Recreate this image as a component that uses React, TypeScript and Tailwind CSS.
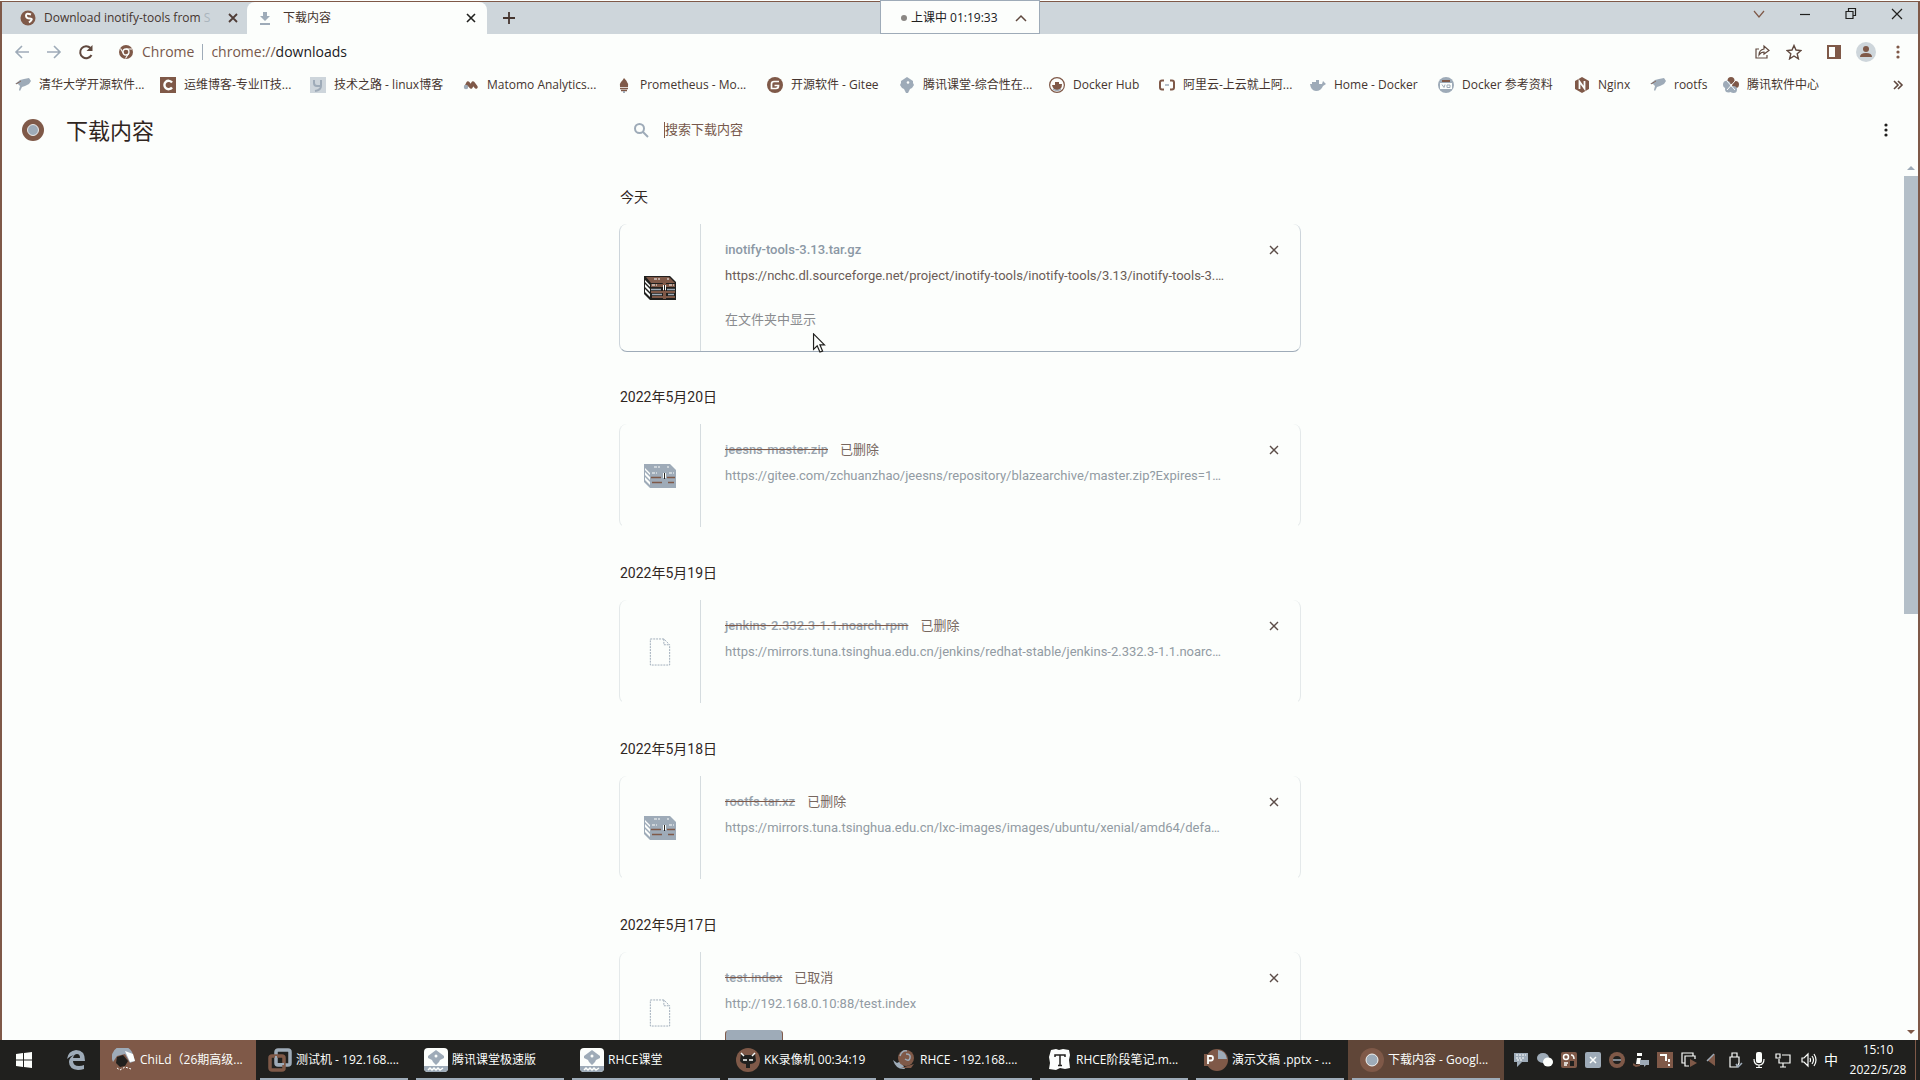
import type { ReactNode } from "react";

const BROWN = "#7f5948";
const BLUE = "#9eabb8";
const PAPER = "#fcfefc";
const INK = "#20201e";

type IconProps = { children: ReactNode; size?: string; box?: string };

function Icon({ children, size = "size-4", box = "0 0 16 16" }: IconProps) {
  return (
    <svg viewBox={box} className={`${size} shrink-0`} fill="none" aria-hidden="true">
      {children}
    </svg>
  );
}

function Cross({ size = "size-3", color = "#4f3c36", weight = "1.600" }: { size?: string; color?: string; weight?: string }) {
  return (
    <Icon size={size} box="0 0 12 12">
      <path d="M2 2l8 8M10 2l-8 8" stroke={color} strokeWidth={weight} />
    </Icon>
  );
}

function Kebab({ color }: { color: string }) {
  return (
    <Icon>
      <g fill={color}>
        <circle cx="8" cy="3" r="1.600" />
        <circle cx="8" cy="8" r="1.600" />
        <circle cx="8" cy="13" r="1.600" />
      </g>
    </Icon>
  );
}

function Bird() {
  return (
    <Icon>
      <path d="M0 7l5-4 4-1 5-1 2 3-2 3-4 2-3 1-2 4-1-1 1-4-2-2z" fill={BLUE} />
      <path d="M1 7l5-3" stroke={BROWN} strokeWidth=".8" />
    </Icon>
  );
}

function Knot() {
  return (
    <Icon>
      <path d="M8 0l3 2 3 2v2l1 2-2 3-2 1-2 4H7l-2-4-2-1-2-3 1-2V4l3-2z" fill={BLUE} />
      <circle cx="9" cy="5.500" r="1.300" fill={PAPER} />
    </Icon>
  );
}

function Chest({ faded }: { faded?: boolean }) {
  const lid = faded ? BLUE : BROWN;
  const dark = faded ? BLUE : INK;
  const band = faded ? BROWN : BLUE;
  return (
    <svg viewBox="0 0 32 24" className="h-6 w-8 shrink-0" aria-hidden="true">
      <path d="M0 0h26l6 6v18H6L0 18z" fill={dark} />
      <path d="M2 1h23l6 6H7z" fill={lid} />
      <path d="M1 4l5 5v2L1 6zM1 8l5 5v3l-5-5zM1 13l5 5v3l-5-5z" fill={PAPER} />
      <path d="M7 8h24v3H7zM7 15h24v2H7zM8 20h23v2H8z" fill={lid} />
      <path d="M10 3h6M23 3h2M8 9h5M25 9h5" stroke={PAPER} strokeWidth="1" strokeDasharray="3 1" />
      <path d="M7 13.500h10M23 13.500h8M8 18.500h10M24 18.500h6" stroke={band} strokeWidth="1.500" />
      <path d="M16 1h3l3 6v16h-3V8z" fill={lid} />
      <path d="M19 9h1v5h-1zM21 9h1v5h-1z" fill={PAPER} />
      <path d="M20 9h1v6h-1z" fill={INK} />
    </svg>
  );
}

function FileIcon() {
  return (
    <svg viewBox="0 0 22 29" className="h-7 w-6 shrink-0" fill="none" aria-hidden="true">
      <path d="M1 1h14l6 6v21H1zM15 1v6h6" stroke={BLUE} strokeWidth="1" strokeDasharray="2 1" />
    </svg>
  );
}

function ChromeBall({ size }: { size: string }) {
  return (
    <Icon size={size}>
      <circle cx="8" cy="8" r="8" fill={BROWN} />
      <circle cx="8" cy="8" r="4" fill={BLUE} stroke={PAPER} strokeWidth=".6" />
    </Icon>
  );
}

const bookmarks: { label: string; width: string; icon: ReactNode }[] = [
  { label: "清华大学开源软件...", width: "w-[145px]", icon: <Bird /> },
  {
    label: "运维博客-专业IT技...",
    width: "w-[150px]",
    icon: (
      <Icon>
        <path d="M0 0h16v16H0z" fill={BROWN} />
        <path d="M12 5.500A4.200 4.200 0 1 0 12 10.500" stroke={PAPER} strokeWidth="2.400" />
      </Icon>
    ),
  },
  {
    label: "技术之路 - linux博客",
    width: "w-[153px]",
    icon: (
      <Icon>
        <path d="M0 0h16v16H0z" fill="#cdd5db" />
        <path d="M4 3v3q0 3 3 3h3M11 3v6q0 4-6 5" stroke={BLUE} strokeWidth="2" />
      </Icon>
    ),
  },
  {
    label: "Matomo Analytics...",
    width: "w-[153px]",
    icon: (
      <Icon>
        <path d="M3 10l2-4 3 4 2-4 3 4" stroke={BROWN} strokeWidth="3.500" strokeLinejoin="round" strokeLinecap="round" />
        <circle cx="3" cy="10" r="2.200" fill={BLUE} />
      </Icon>
    ),
  },
  {
    label: "Prometheus - Mo...",
    width: "w-[151px]",
    icon: (
      <Icon>
        <path d="M8 1q3 3 3 4 2 2 1 5H4Q3 7 5 5q2-2 3-4z" fill={BROWN} />
        <path d="M4 11.500h8M5 13.500h6" stroke={BROWN} strokeWidth="1.300" />
        <path d="M7 14h2v2H7z" fill={BLUE} />
      </Icon>
    ),
  },
  {
    label: "开源软件 - Gitee",
    width: "w-[132px]",
    icon: (
      <Icon>
        <circle cx="8" cy="8" r="8" fill={BROWN} />
        <path d="M12 4.500H7Q4.500 4.500 4.500 7v4.500H9Q11.500 11.500 11.500 8.500H7.500" stroke={PAPER} strokeWidth="1.700" />
      </Icon>
    ),
  },
  { label: "腾讯课堂-综合性在...", width: "w-[150px]", icon: <Knot /> },
  {
    label: "Docker Hub",
    width: "w-[110px]",
    icon: (
      <Icon>
        <circle cx="8" cy="8" r="7.400" stroke={BROWN} strokeWidth="1.200" />
        <path d="M3 8h3V5h4v2h3q0 6-5 6-4 0-5-5z" fill={BROWN} />
        <path d="M4 12q4 3 8 0" stroke={BLUE} strokeWidth="1.500" />
      </Icon>
    ),
  },
  {
    label: "阿里云-上云就上阿...",
    width: "w-[151px]",
    icon: (
      <Icon>
        <path d="M5 3.500H3q-2 0-2 2v5q0 2 2 2h2M11 3.500h2q2 0 2 2v5q0 2-2 2h-2" stroke={BROWN} strokeWidth="2" />
        <path d="M6 8h4" stroke={BLUE} strokeWidth="1.500" />
      </Icon>
    ),
  },
  {
    label: "Home - Docker",
    width: "w-[128px]",
    icon: (
      <Icon>
        <path d="M0 7h2V5h4V3h3v4h3l1-3 3 3-3 2q-2 5-7 5-5 0-6-7z" fill={BLUE} />
      </Icon>
    ),
  },
  {
    label: "Docker 参考资料",
    width: "w-[136px]",
    icon: (
      <Icon>
        <circle cx="8" cy="8" r="8" fill={BLUE} />
        <path d="M4 4h8" stroke={BROWN} strokeWidth="2" />
        <path d="M2 6h12v6H2z" fill={PAPER} />
        <path d="M4 7.500l2 3 1-3M9 10.500V8h3v2.500z" stroke={BLUE} />
      </Icon>
    ),
  },
  {
    label: "Nginx",
    width: "w-[76px]",
    icon: (
      <Icon>
        <path d="M8 0l7 4v8l-7 4-7-4V4z" fill={BROWN} />
        <path d="M5.500 12V4.500l5 7V4" stroke={PAPER} strokeWidth="1.800" />
      </Icon>
    ),
  },
  { label: "rootfs", width: "w-[73px]", icon: <Bird /> },
  {
    label: "腾讯软件中心",
    width: "w-[110px]",
    icon: (
      <Icon>
        <circle cx="8" cy="3.500" r="3.500" fill={BROWN} />
        <circle cx="12.500" cy="7.500" r="3.500" fill={BROWN} />
        <circle cx="3.800" cy="7.500" r="3.800" fill={BLUE} />
        <circle cx="5.500" cy="12" r="3.500" fill={BLUE} />
        <circle cx="10.500" cy="12.500" r="3.500" fill={BLUE} />
        <path d="M4 4l8 9M12 4l-8 9" stroke={PAPER} />
      </Icon>
    ),
  },
];

type Download = {
  name: string;
  url: string;
  state?: string;
  kind: "archive" | "file";
  showLink?: boolean;
  retry?: boolean;
};

const groups: { date: string; item: Download }[] = [
  {
    date: "今天",
    item: {
      name: "inotify-tools-3.13.tar.gz",
      url: "https://nchc.dl.sourceforge.net/project/inotify-tools/inotify-tools/3.13/inotify-tools-3.…",
      kind: "archive",
      showLink: true,
    },
  },
  {
    date: "2022年5月20日",
    item: {
      name: "jeesns-master.zip",
      state: "已删除",
      url: "https://gitee.com/zchuanzhao/jeesns/repository/blazearchive/master.zip?Expires=1…",
      kind: "archive",
    },
  },
  {
    date: "2022年5月19日",
    item: {
      name: "jenkins-2.332.3-1.1.noarch.rpm",
      state: "已删除",
      url: "https://mirrors.tuna.tsinghua.edu.cn/jenkins/redhat-stable/jenkins-2.332.3-1.1.noarc…",
      kind: "file",
    },
  },
  {
    date: "2022年5月18日",
    item: {
      name: "rootfs.tar.xz",
      state: "已删除",
      url: "https://mirrors.tuna.tsinghua.edu.cn/lxc-images/images/ubuntu/xenial/amd64/defa…",
      kind: "archive",
    },
  },
  {
    date: "2022年5月17日",
    item: {
      name: "test.index",
      state: "已取消",
      url: "http://192.168.0.10:88/test.index",
      kind: "file",
      retry: true,
    },
  },
];

function DownloadCard({ item }: { item: Download }) {
  const active = !item.state;
  return (
    <article
      className={`mb-2 flex rounded-lg border border-t-0 ${
        active
          ? "h-32 border-[#cdd5db] border-b-[#9eabb8]"
          : item.retry
            ? "h-[122px] border-[#e4e9ea]"
            : "h-[104px] border-[#e4e9ea] border-b-transparent"
      }`}
    >
      <div className="flex w-[81px] shrink-0 items-center justify-center border-r border-[#d5dcdf]">
        {item.kind === "archive" ? <Chest faded={!active} /> : <FileIcon />}
      </div>
      <div className="min-w-0 flex-1 pl-6 pt-4 text-[13px] leading-5">
        <div className="flex gap-3">
          {active ? (
            <a href="#file" className="font-medium text-[#8b98a5]">{item.name}</a>
          ) : (
            <>
              <span className="font-medium text-[#98a3ad] line-through decoration-[#7f5948]">{item.name}</span>
              <span className="text-[#77675f]">{item.state}</span>
            </>
          )}
        </div>
        <a href="#source" className={`mt-1.5 block whitespace-nowrap ${active ? "text-[#6b5c57]" : "text-[#929ba3]"}`}>
          {item.url}
        </a>
        {item.showLink && (
          <a href="#folder" className="mt-6 block text-[#8a8c8f]">在文件夹中显示</a>
        )}
        {item.retry && (
          <button
            type="button"
            aria-label="重试"
            className="mt-4 block h-8 w-[58px] rounded border border-[#7f5948] border-t-[#9eabb8] bg-[#9eabb8]"
          />
        )}
      </div>
      <button type="button" aria-label="从列表中移除" className="mr-4 mt-4 flex size-5 items-center justify-center">
        <Cross color="#5c4d48" weight="1.400" />
      </button>
    </article>
  );
}

function ClassroomIcon() {
  return (
    <Icon size="size-6" box="0 0 24 24">
      <rect width="24" height="24" rx="4" fill={PAPER} />
      <path d="M12 2l4 3 4 3v2l-4 2-1 2-3 3-3-3-1-2-4-2V8l4-3z" fill={BLUE} />
      <path d="M0 18h24v2q0 4-4 4H4q-4 0-4-4z" fill={BLUE} />
      <circle cx="12" cy="8" r="1.500" fill={PAPER} />
      <path d="M4 22l2-2 2 2 2-2 2 2 2-2 2 2 3-2" stroke={PAPER} strokeWidth="1.500" />
    </Icon>
  );
}

const tasks: { label: string; icon: ReactNode; tone?: string; plain?: boolean }[] = [
  {
    label: "ChiLd（26期高级...",
    tone: "bg-[#7f5948]",
    plain: true,
    icon: (
      <Icon size="size-6" box="0 0 24 24">
        <path d="M1 14A10 10 0 0 1 20 4l3 9-5 2-5-9-8 2z" fill={BLUE} />
        <path d="M13 3l8 3 2 7-5 1z" fill={PAPER} />
        <path d="M5 9l6-2 5 6-3 5-5 1-4-4z" fill={INK} />
        <path d="M5 20l3 2 5-3 6 2" stroke={PAPER} strokeDasharray="2 1.500" />
      </Icon>
    ),
  },
  {
    label: "测试机 - 192.168....",
    icon: (
      <Icon size="size-6" box="0 0 24 24">
        <rect x="8" y="2" width="14" height="15" rx="2" stroke={BLUE} strokeWidth="3.500" />
        <rect x="2" y="8" width="14" height="14" rx="2" stroke={BROWN} strokeWidth="3.500" />
        <path d="M8 8v8h8" stroke={BLUE} strokeWidth="2" />
      </Icon>
    ),
  },
  { label: "腾讯课堂极速版", icon: <ClassroomIcon /> },
  { label: "RHCE课堂", icon: <ClassroomIcon /> },
  {
    label: "KK录像机 00:34:19",
    icon: (
      <Icon size="size-6" box="0 0 24 24">
        <circle cx="12" cy="12" r="12" fill={BROWN} />
        <path d="M5 5l4 2h6l4-2 1 8q-2 3-6 3v4h-4v-4q-4 0-6-3z" fill={INK} />
        <path d="M5 5l3 3M19 5l-3 3M7 12h4M13 12h4" stroke={PAPER} strokeWidth="1.500" />
      </Icon>
    ),
  },
  {
    label: "RHCE - 192.168....",
    icon: (
      <Icon size="size-6" box="0 0 24 24">
        <path d="M1 12l4 3 4-2 4 8q-9 1-12-9z" fill={BLUE} />
        <circle cx="14" cy="10" r="8" fill={BROWN} />
        <path d="M9 20l13-4-3 4z" fill={BROWN} />
        <path d="M8 8q2-6 7-5M14 6q5 0 4 4t-5 1" stroke={BLUE} strokeWidth="1.500" />
      </Icon>
    ),
  },
  {
    label: "RHCE阶段笔记.m...",
    icon: (
      <Icon size="size-6" box="0 0 24 24">
        <path d="M3 2l5-1 3 1 4-1 6 1 1 5-1 5 1 8-5 1-5-1-4 2-7-1 1-6-1-6z" fill={PAPER} />
        <path d="M7 9V7h10v2M12 7v10M10 17.500h4" stroke={INK} strokeWidth="1.500" />
      </Icon>
    ),
  },
  {
    label: "演示文稿 .pptx - ...",
    icon: (
      <Icon size="size-6" box="0 0 24 24">
        <circle cx="13" cy="12" r="11" fill={BROWN} />
        <path d="M14 2q8 1 9 9h-9z" fill={BLUE} />
        <path d="M0 6h11v12H0z" fill={BROWN} />
        <path d="M4 16V8h3q2 0 2 2.200T7 12.500H4" stroke={PAPER} strokeWidth="1.800" />
      </Icon>
    ),
  },
  { label: "下载内容 - Googl...", tone: "bg-[#604638]", icon: <ChromeBall size="size-6" /> },
];

const tray: { name: string; width: string; icon: ReactNode }[] = [
  { name: "消息", width: "w-6", icon: (<Icon><path d="M1 1h14v9H9l-5 5v-5H1z" fill={BLUE} /><path d="M3 3h10M3 6h9M4 8h6" stroke={PAPER} strokeDasharray="2 1" /></Icon>) },
  { name: "微信", width: "w-6", icon: (<Icon><ellipse cx="6" cy="6" rx="6" ry="5" fill={BLUE} /><ellipse cx="11" cy="10" rx="5" ry="4.500" fill={PAPER} /></Icon>) },
  { name: "剪贴板", width: "w-6", icon: (<Icon><rect width="16" height="16" rx="2" fill={BROWN} /><circle cx="5" cy="5" r="2.500" stroke={PAPER} strokeWidth="1.500" /><path d="M10 3q3 0 3 4M3 11h4M3 13h3" stroke={PAPER} strokeWidth="1.500" /><path d="M9 9h4v5H9z" fill={INK} /></Icon>) },
  { name: "组件", width: "w-6", icon: (<Icon><rect width="16" height="16" rx="2" fill={BLUE} /><path d="M5 5l6 6M11 5l-6 6" stroke={PAPER} strokeWidth="1.500" /></Icon>) },
  { name: "录像机", width: "w-6", icon: (<Icon><circle cx="8" cy="8" r="8" fill={BROWN} /><path d="M4 8q0-4 4-4t4 4-4 4-4-4z" fill={INK} /><path d="M4 8h8" stroke={BLUE} strokeWidth="1.500" /></Icon>) },
  { name: "助手", width: "w-6", icon: (<Icon><path d="M4 1h5v3H4zM4 6h4l-1 6H3z" fill={PAPER} /><path d="M7 8h9v5h-3l-2 2v-2H7z" fill={BLUE} /><path d="M0 12l3 2 4-1" stroke={BROWN} strokeWidth="2" /></Icon>) },
  { name: "警告", width: "w-6", icon: (<Icon><path d="M0 0h16v16H0z" fill={BROWN} /><path d="M3 3h6v6M12 7v3M12 12v2" stroke={PAPER} strokeWidth="2" /></Icon>) },
  { name: "虚拟机", width: "w-6", icon: (<Icon><path d="M4 11H1V1h11v3M8 14H4V4h10v3" stroke={PAPER} strokeWidth="1.200" /><path d="M9 7l7 4-7 4z" fill={BROWN} /></Icon>) },
  { name: "播放", width: "w-5", icon: (<Icon><path d="M12 2v12L4 8z" fill={BROWN} /><path d="M11 2L4 9" stroke={BLUE} strokeWidth="1.500" /></Icon>) },
  { name: "USB", width: "w-7", icon: (<Icon><path d="M5 1h5v4H5zM3 5h9v6l-2 4H3z" stroke={PAPER} strokeWidth="1.200" /><path d="M9 12l2 3 4-4" stroke={BLUE} strokeWidth="1.500" /></Icon>) },
  { name: "麦克风", width: "w-5", icon: (<Icon><rect x="5" width="6" height="11" rx="2" fill={PAPER} /><path d="M3 7q0 6 5 6t5-6M8 13v3M5 15.500h6" stroke={PAPER} strokeWidth="1.200" /></Icon>) },
  { name: "网络", width: "w-7", icon: (<Icon><path d="M1 2h4v4H1zM7 3h8v8H4V7M8 11v4M5 15h6" stroke={PAPER} strokeWidth="1.200" /></Icon>) },
  { name: "音量", width: "w-6", icon: (<Icon><path d="M1 6h2l4-4v12l-4-4H1zM9 6q1 2 0 4M11 4q3 4 0 8M13 2q4 6 0 12" stroke={PAPER} strokeWidth="1.200" /></Icon>) },
];

export default function App() {
  return (
    <div className="flex h-screen w-full flex-col overflow-hidden bg-[#fcfefc] font-['Open_Sans','Noto_Sans_CJK_SC',sans-serif] text-xs text-[#45352f]">
      <div className="mt-px flex min-h-0 flex-1 flex-col border-x-2 border-t border-[#7f5948]">
        <header className="shrink-0">
          <div className="relative flex h-8 items-stretch bg-[#ced6db]">
            <div className="flex w-[245px] items-center pl-[18px] pr-2">
              <Icon>
                <circle cx="8" cy="8" r="7.500" fill={BROWN} />
                <path d="M11 4.500q-5-2-5 1t4 3-1 4" stroke={PAPER} strokeWidth="2" />
              </Icon>
              <span className="ml-2 w-[170px] overflow-hidden whitespace-nowrap text-[#45352f]">
                Download inotify-tools from <span className="text-[#aab5bd]">S</span>
              </span>
              <button type="button" aria-label="关闭标签页" className="ml-auto"><Cross weight="1.800" /></button>
            </div>
            <div className="flex w-60 items-center rounded-t-lg bg-[#fcfefc] px-2.5">
              <Icon>
                <path d="M6 2h4v4h3l-5 5-5-5h3zM3 13h10v2H3z" fill={BLUE} />
              </Icon>
              <span className="ml-2.5">下载内容</span>
              <button type="button" aria-label="关闭标签页" className="ml-auto"><Cross color={INK} /></button>
            </div>
            <button type="button" aria-label="新标签页" className="ml-3.5 flex items-center">
              <Icon><path d="M8 2v12M2 8h12" stroke="#45352f" strokeWidth="1.800" /></Icon>
            </button>
            <div className="-mr-0.5 ml-auto flex items-start pt-1">
              {[
                ["搜索标签页", "M3 5l5 6 5-6", BROWN],
                ["最小化", "M3 8.500h10", INK],
                ["还原", "M3 5.500h7v7H3zM5.500 5.500v-3h7v7H10", INK],
                ["关闭", "M3 3l10 10M13 3L3 13", INK],
              ].map(([name, d, color]) => (
                <button key={name} type="button" aria-label={name} className="flex w-[46px] justify-center">
                  <Icon><path d={d} stroke={color} strokeWidth="1.200" /></Icon>
                </button>
              ))}
            </div>
          </div>
          <div className="flex h-9 items-center pr-1">
            <div className="flex items-center gap-4 pl-3">
              <button type="button" aria-label="后退"><Icon><path d="M15 8H2M8 2L2 8l6 6" stroke={BLUE} strokeWidth="1.600" /></Icon></button>
              <button type="button" aria-label="前进"><Icon><path d="M1 8h13M8 2l6 6-6 6" stroke={BLUE} strokeWidth="1.600" /></Icon></button>
              <button type="button" aria-label="重新加载">
                <Icon>
                  <path d="M13.500 11A6 6 0 1 1 12.500 4" stroke="#5f483e" strokeWidth="2" />
                  <path d="M14.500 1v6h-6z" fill="#5f483e" />
                </Icon>
              </button>
            </div>
            <div className="ml-6 flex flex-1 items-center text-sm">
              <Icon>
                <circle cx="8" cy="8" r="7" fill={BROWN} />
                <circle cx="8" cy="8" r="3" fill={BROWN} stroke={PAPER} strokeWidth="1.300" />
                <path d="M8 5h6M5.500 9.500l-3-5M10.500 9.500l-3 5" stroke={PAPER} strokeWidth="1.100" />
              </Icon>
              <span className="ml-2 text-[#77584b]">Chrome</span>
              <span className="mx-2 h-4 w-px bg-[#9eabb8]" />
              <span className="text-[#77584b]">chrome://<span className="text-[#20201e]">downloads</span></span>
            </div>
            <div className="flex items-center">
              <button type="button" aria-label="分享" className="flex w-8 justify-center">
                <Icon><path d="M5 5H2v9h11v-3M5 11q0-5 5-6V2l5 4.500L10 10V8q-3 0-5 3z" stroke="#5f483e" strokeWidth="1.200" /></Icon>
              </button>
              <button type="button" aria-label="收藏" className="mr-2 flex w-8 justify-center">
                <Icon><path d="M8 1.500l2 4.500 5 .5-3.800 3.300 1.200 5L8 12l-4.400 2.800 1.200-5L1 6.500 6 6z" stroke="#5f483e" strokeWidth="1.400" /></Icon>
              </button>
              <button type="button" aria-label="侧边栏" className="flex w-8 justify-center">
                <Icon><path d="M1 1h14v14H1z" fill={BROWN} /><path d="M3 3h6v10H3z" fill={PAPER} /></Icon>
              </button>
              <button type="button" aria-label="用户" className="flex w-8 justify-center">
                <Icon size="size-5" box="0 0 20 20">
                  <circle cx="10" cy="10" r="10" fill="#ced6db" />
                  <circle cx="10" cy="7" r="3" fill={BROWN} />
                  <path d="M4 15q0-4 6-4t6 4z" fill={BROWN} />
                </Icon>
              </button>
              <button type="button" aria-label="菜单" className="flex w-8 justify-center"><Kebab color={BROWN} /></button>
            </div>
          </div>
          <nav aria-label="书签" className="flex h-[30px] items-center whitespace-nowrap pl-[13px] pr-3">
            {bookmarks.map((b) => (
              <a key={b.label} href="#bookmark" className={`flex shrink-0 items-center gap-2 ${b.width}`}>
                {b.icon}
                <span>{b.label}</span>
              </a>
            ))}
            <button type="button" aria-label="更多书签" className="ml-auto">
              <Icon><path d="M4 4l4 4-4 4M8 4l4 4-4 4" stroke="#5f483e" strokeWidth="1.600" /></Icon>
            </button>
          </nav>
        </header>

        <main className="flex min-h-0 flex-1 flex-col font-[Roboto,'Noto_Sans_CJK_SC',sans-serif]">
          <div className="grid h-[60px] shrink-0 grid-cols-[1fr_682px_1fr] items-center">
            <div className="flex items-center pl-5">
              <ChromeBall size="size-[22px]" />
              <h1 className="ml-[22px] pt-1 text-[22px] leading-8 text-[#30261f]">下载内容</h1>
            </div>
            <label className="flex items-center pl-3.5">
              <Icon>
                <circle cx="6.500" cy="6.500" r="4.500" stroke={BLUE} strokeWidth="2" />
                <path d="M10 10l5 5" stroke={BLUE} strokeWidth="2" />
              </Icon>
              <input
                type="search"
                aria-label="搜索下载内容"
                placeholder="搜索下载内容"
                className="ml-[15px] h-4 flex-1 border-l border-[#7f5948] bg-transparent text-[13px] outline-none placeholder:text-[#77584b]"
              />
            </label>
            <div className="flex justify-end pr-6">
              <button type="button" aria-label="更多操作"><Kebab color={INK} /></button>
            </div>
          </div>
          <div className="flex min-h-0 flex-1">
            <div className="min-w-0 flex-1 overflow-hidden pl-3.5">
              <div className="mx-auto w-[682px]">
                {groups.map((g) => (
                  <section key={g.date}>
                    <h2 className="px-px pb-3 pt-[22px] text-sm leading-[30px] text-[#30261f]">{g.date}</h2>
                    <DownloadCard item={g.item} />
                  </section>
                ))}
              </div>
            </div>
            <div className="flex w-3.5 shrink-0 flex-col items-center" aria-hidden="true">
              <Icon><path d="M4 10l4-4 4 4z" fill={BLUE} /></Icon>
              <div className="h-[438px] w-full bg-[#b4bfc8]" />
              <div className="mt-auto"><Icon><path d="M4 6l4 4 4-4z" fill={BROWN} /></Icon></div>
            </div>
          </div>
        </main>
      </div>

      <footer className="flex h-10 shrink-0 items-stretch bg-[#20201e] text-[#fcfefc]">
        <button type="button" aria-label="开始" className="flex w-12 shrink-0 items-center justify-center">
          <Icon><path d="M0 2l7-1v6.500H0zM8 1l8-1v7.500H8zM0 8.500h7V15l-7-1zM8 8.500h8V16l-8-1z" fill={PAPER} /></Icon>
        </button>
        <button type="button" aria-label="Edge" className="flex w-[52px] shrink-0 items-center justify-center pl-1">
          <Icon size="size-5" box="0 0 20 20">
            <path d="M1 9Q2 1 10 0q9 0 9 11H7q0 5 6 5 3 0 5-1v4q-3 1-6 1-9-1-9-8 0-4 5-7-4 1-7 4zM7 8h7q0-4-3-4T7 8z" fill={BLUE} />
          </Icon>
        </button>
        {tasks.map((t) => (
          <button key={t.label} type="button" className={`relative flex w-[156px] shrink-0 items-center gap-1 whitespace-nowrap pl-3 ${t.tone ?? ""}`}>
            {t.icon}
            <span>{t.label}</span>
            {!t.plain && <span className="absolute inset-x-1 bottom-0 h-0.5 bg-[#9eabb8]" />}
          </button>
        ))}
        <div className="ml-auto flex shrink-0 items-center">
          {tray.map((t) => (
            <button key={t.name} type="button" aria-label={t.name} className={`flex justify-center ${t.width}`}>
              {t.icon}
            </button>
          ))}
          <span className="w-5 text-center text-sm">中</span>
          <time className="w-[74px] text-center leading-5">
            15:10
            <br />
            2022/5/28
          </time>
          <span className="mr-1 h-10 w-px bg-[#7f5948]" />
        </div>
      </footer>

      <div className="absolute left-1/2 top-0 flex h-[34px] w-40 -translate-x-1/2 items-center justify-between border border-[#9eabb8] bg-[#fcfefc] px-3 pt-0.5 text-[#20201e]">
        <span className="flex items-center gap-1 pl-1">
          <span className="ml-1 size-1.5 rounded-full bg-[#8a8784]" />
          上课中 01:19:33
        </span>
        <button type="button" aria-label="收起">
          <Icon size="size-3" box="0 0 12 12"><path d="M1 9l5-5 5 5" stroke="#5f483e" strokeWidth="1.500" /></Icon>
        </button>
      </div>

      <svg viewBox="0 0 14 22" className="pointer-events-none absolute left-[812px] top-[333px] h-5 w-3.5" aria-hidden="true">
        <path d="M1 1v17l4-4 3 7 3-1-3-7h5z" fill={PAPER} stroke={INK} strokeWidth="1.300" />
      </svg>
    </div>
  );
}
